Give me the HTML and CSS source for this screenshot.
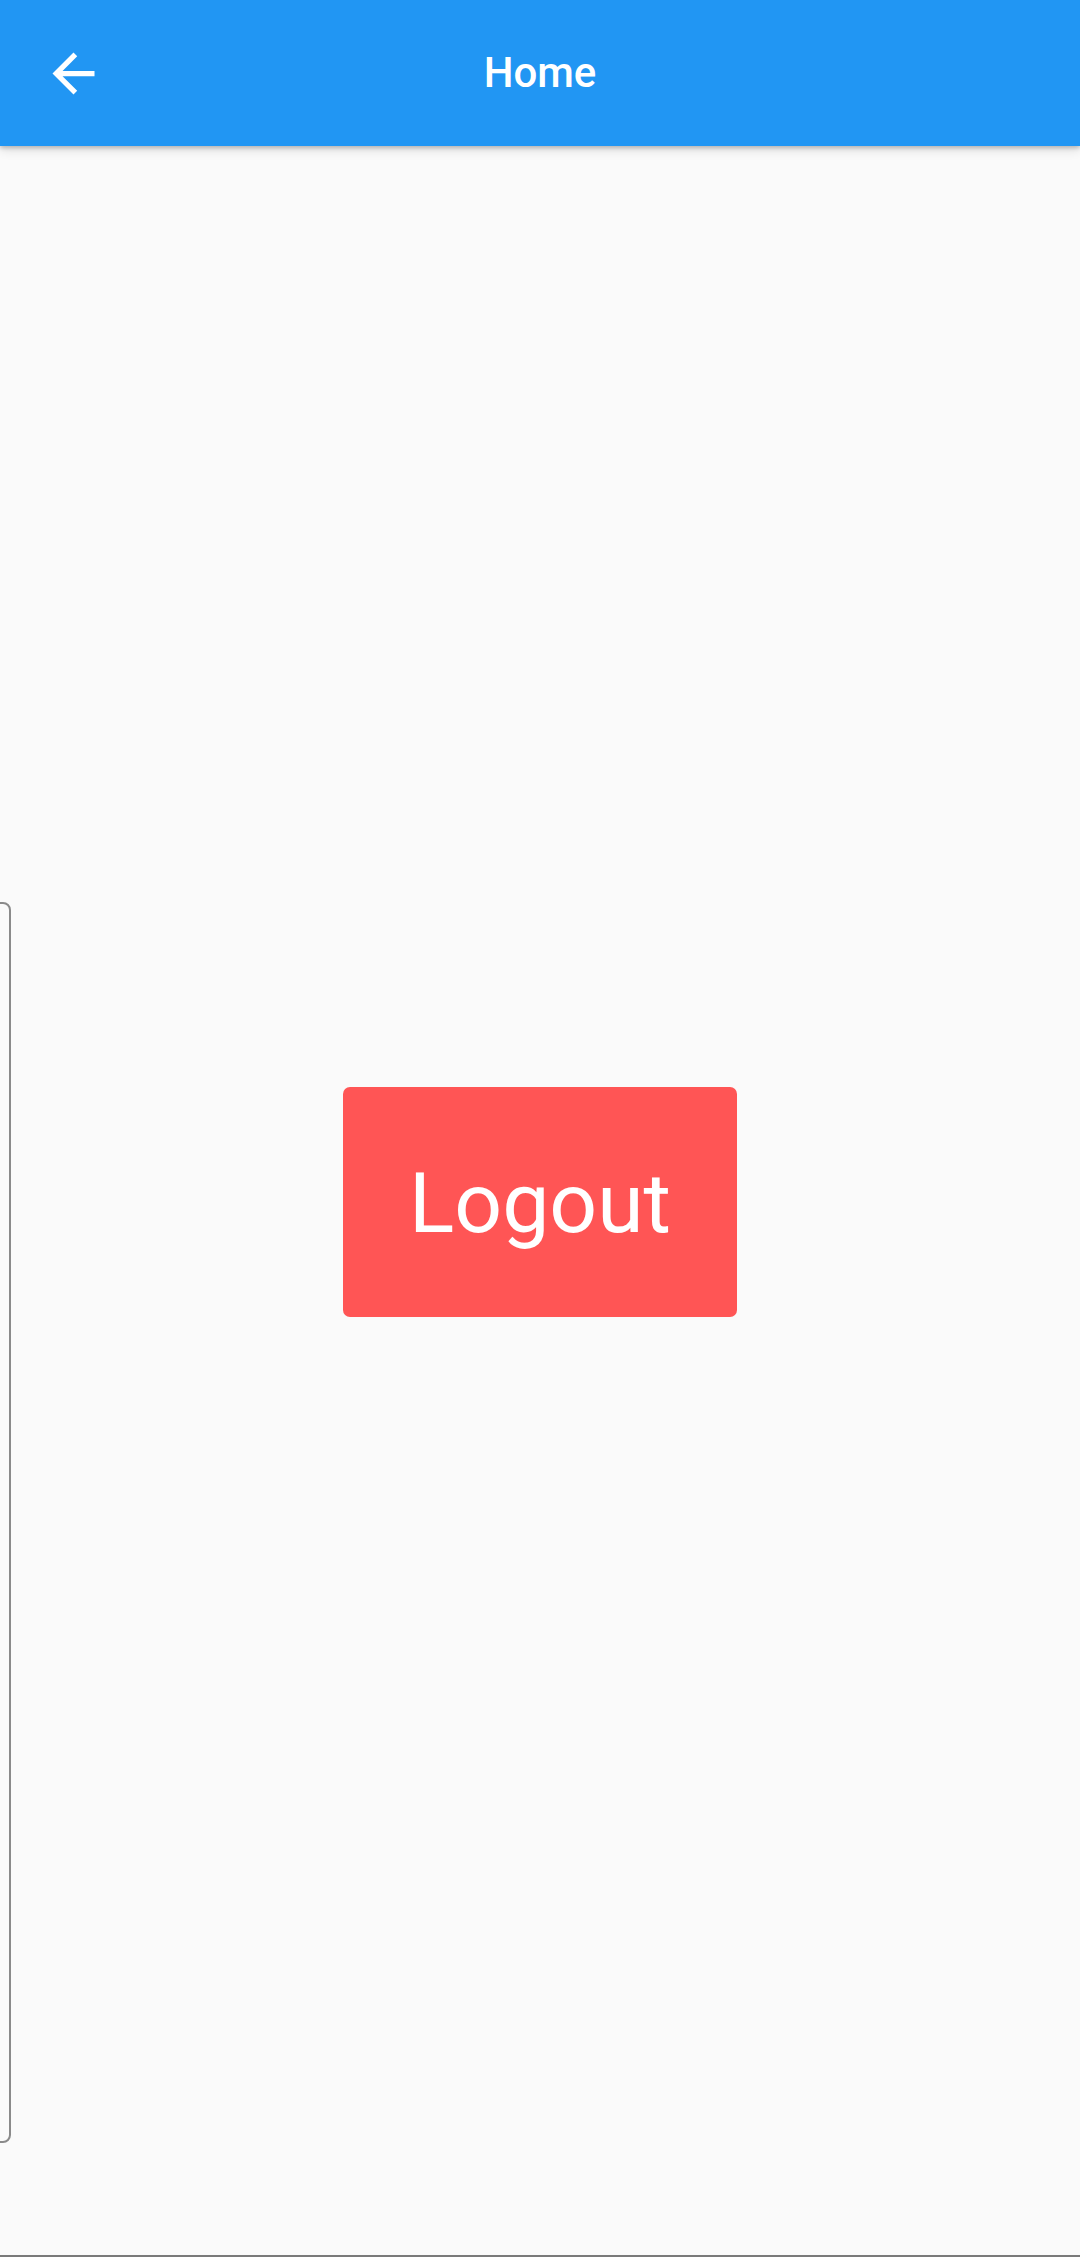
FILE: index.html
```html
<!DOCTYPE html>
<html>
<head>
<meta charset="utf-8">
<link rel="stylesheet" href="styles.css">
</head>
<body>
<div class="screen">
  <header class="appbar">
    <button class="back" aria-label="Back">
      <svg viewBox="0 0 24 24" width="63" height="63"><path fill="#fff" d="M20 11H7.83l5.59-5.59L12 4l-8 8 8 8 1.41-1.41L7.83 13H20v-2z"/></svg>
    </button>
    <h1 class="title">Home</h1>
  </header>
  <main class="content">
    <button class="logout">Logout</button>
  </main>
  <div class="edge"></div>
</div>
</body>
</html>
```
FILE: styles.css
```css
html, body {
  margin: 0;
  padding: 0;
}
body {
  background: #fafafa;
  font-family: Roboto, "Noto Sans", sans-serif;
}
.screen {
  position: relative;
  height: 2255px;
  border-bottom: 2px solid #7a7a7a;
  display: flex;
  flex-direction: column;
  overflow: hidden;
}
.appbar {
  position: relative;
  z-index: 2;
  height: 146px;
  flex: none;
  background: #2196f3;
  display: flex;
  align-items: center;
  justify-content: center;
  box-shadow: 0 2px 4px rgba(0,0,0,0.2), 0 4px 10px rgba(0,0,0,0.12);
}
.back {
  position: absolute;
  left: 42px;
  top: 42px;
  width: 63px;
  height: 63px;
  padding: 0;
  border: 0;
  background: none;
  display: flex;
}
.title {
  margin: 0;
  color: #fff;
  font-size: 42px;
  font-weight: 500;
  line-height: 1;
}
.content {
  flex: 1;
  display: flex;
  align-items: center;
  justify-content: center;
}
.logout {
  width: 394px;
  height: 230px;
  border: 0;
  border-radius: 7px;
  background: #ff5555;
  color: #fff;
  font-family: Roboto, "Noto Sans", sans-serif;
  font-size: 84px;
  font-weight: 400;
  padding: 4px 0 0 0;
  margin-top: 2px;
}
.edge {
  position: absolute;
  left: -14px;
  top: 902px;
  width: 21px;
  height: 1237px;
  border: 2px solid #8a8a8a;
  border-radius: 8px;
}
```
